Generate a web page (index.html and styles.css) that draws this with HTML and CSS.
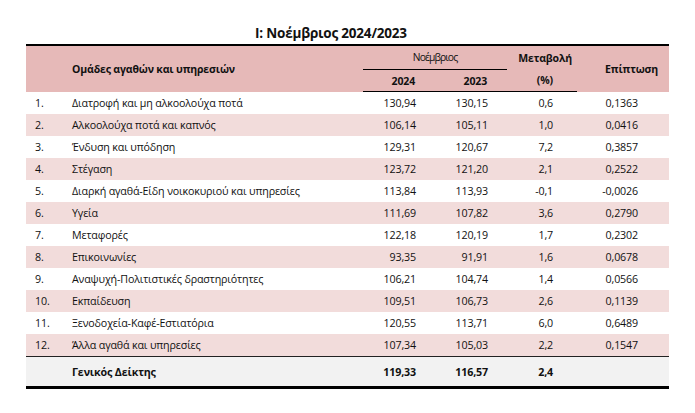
FILE: index.html
```html
<!DOCTYPE html>
<html lang="el">
<head>
<meta charset="utf-8">
<title>Νοέμβριος 2024/2023</title>
<link rel="stylesheet" href="styles.css">
</head>
<body>
<div class="page">
  <div class="title">I: Νοέμβριος 2024/2023</div>
  <table class="cpi">
    <colgroup>
      <col class="c-num"><col class="c-desc"><col class="c-y"><col class="c-y"><col class="c-chg"><col class="c-imp">
    </colgroup>
    <thead>
      <tr class="h1">
        <th colspan="2" rowspan="2" class="h-groups">Ομάδες αγαθών και υπηρεσιών</th>
        <th colspan="2" class="h-month"><span>Νοέμβριος</span></th>
        <th class="h-chg">Μεταβολή</th>
        <th rowspan="2" class="h-imp">Επίπτωση</th>
      </tr>
      <tr class="h2">
        <th class="h-year">2024</th>
        <th class="h-year">2023</th>
        <th class="h-pct">(%)</th>
      </tr>
    </thead>
    <tbody>
      <tr><td class="num">1.</td><td class="desc">Διατροφή και μη αλκοολούχα ποτά</td><td class="v">130,94</td><td class="v">130,15</td><td class="v chg">0,6</td><td class="v imp">0,1363</td></tr>
      <tr class="alt"><td class="num">2.</td><td class="desc">Αλκοολούχα ποτά και καπνός</td><td class="v">106,14</td><td class="v">105,11</td><td class="v chg">1,0</td><td class="v imp">0,0416</td></tr>
      <tr><td class="num">3.</td><td class="desc">Ένδυση και υπόδηση</td><td class="v">129,31</td><td class="v">120,67</td><td class="v chg">7,2</td><td class="v imp">0,3857</td></tr>
      <tr class="alt"><td class="num">4.</td><td class="desc">Στέγαση</td><td class="v">123,72</td><td class="v">121,20</td><td class="v chg">2,1</td><td class="v imp">0,2522</td></tr>
      <tr><td class="num">5.</td><td class="desc">Διαρκή αγαθά-Είδη νοικοκυριού και υπηρεσίες</td><td class="v">113,84</td><td class="v">113,93</td><td class="v chg">-0,1</td><td class="v imp">-0,0026</td></tr>
      <tr class="alt"><td class="num">6.</td><td class="desc">Υγεία</td><td class="v">111,69</td><td class="v">107,82</td><td class="v chg">3,6</td><td class="v imp">0,2790</td></tr>
      <tr><td class="num">7.</td><td class="desc">Μεταφορές</td><td class="v">122,18</td><td class="v">120,19</td><td class="v chg">1,7</td><td class="v imp">0,2302</td></tr>
      <tr class="alt"><td class="num">8.</td><td class="desc">Επικοινωνίες</td><td class="v">93,35</td><td class="v">91,91</td><td class="v chg">1,6</td><td class="v imp">0,0678</td></tr>
      <tr><td class="num">9.</td><td class="desc">Αναψυχή-Πολιτιστικές δραστηριότητες</td><td class="v">106,21</td><td class="v">104,74</td><td class="v chg">1,4</td><td class="v imp">0,0566</td></tr>
      <tr class="alt"><td class="num">10.</td><td class="desc">Εκπαίδευση</td><td class="v">109,51</td><td class="v">106,73</td><td class="v chg">2,6</td><td class="v imp">0,1139</td></tr>
      <tr><td class="num">11.</td><td class="desc">Ξενοδοχεία-Καφέ-Εστιατόρια</td><td class="v">120,55</td><td class="v">113,71</td><td class="v chg">6,0</td><td class="v imp">0,6489</td></tr>
      <tr class="alt"><td class="num">12.</td><td class="desc">Άλλα αγαθά και υπηρεσίες</td><td class="v">107,34</td><td class="v">105,03</td><td class="v chg">2,2</td><td class="v imp">0,1547</td></tr>
    </tbody>
    <tfoot>
      <tr class="total"><td class="num"></td><td class="desc">Γενικός Δείκτης</td><td class="v">119,33</td><td class="v">116,57</td><td class="v chg">2,4</td><td class="v imp"></td></tr>
    </tfoot>
  </table>
</div>
</body>
</html>
```

FILE: styles.css
```css
html, body {
  margin: 0;
  padding: 0;
  background: #ffffff;
}

.page {
  padding: 25px 0 0 26px;
  font-family: "Open Sans", "Noto Sans", "DejaVu Sans", sans-serif;
  color: #111;
}

.title {
  margin-left: 229px;
  font-size: 13.5px;
  font-weight: 700;
  line-height: 17px;
  height: 19px;
  color: #111;
  letter-spacing: -0.2px;
}

.cpi {
  border-collapse: collapse;
  table-layout: fixed;
  width: 643px;
  font-size: 10.7px;
  letter-spacing: -0.15px;
}

.c-num { width: 40px; }
.c-desc { width: 297px; }
.c-y { width: 72px; }
.c-chg { width: 70px; }
.c-imp { width: 92px; }

.cpi thead tr {
  background: #e6b9b8;
}

.cpi thead .h1 th {
  border-top: 2px solid #000;
  height: 23px;
}

.cpi thead .h2 th {
  border-bottom: 1.5px solid #000;
  height: 21px;
}

.cpi th {
  padding: 0;
  font-weight: 700;
  font-size: 10.5px;
  color: #111;
  vertical-align: middle;
}

.h-groups {
  text-align: left;
  padding-left: 46px !important;
}

.h-month {
  text-align: center;
  border-bottom: 1.5px solid #000;
}

.h-month span {
  font-size: 10.3px;
  font-weight: 400;
  letter-spacing: -0.9px;
  position: relative;
  top: -1px;
}

.h-year {
  text-align: right;
  padding-right: 20px !important;
}

.h-chg {
  text-align: right;
  padding-right: 5px !important;
}

.h-pct {
  text-align: right;
  padding-right: 24px !important;
}

.h-imp {
  text-align: right;
  padding-right: 11px !important;
}

.cpi td {
  height: 22px;
  padding: 0;
  vertical-align: middle;
  white-space: nowrap;
  overflow: hidden;
}

.cpi tbody tr.alt {
  background: #f2dcdb;
}

.num {
  padding-left: 9px !important;
}

.desc {
  padding-left: 6px !important;
}

.v {
  text-align: right;
  padding-right: 19px !important;
}

.v.chg {
  padding-right: 24px !important;
}

.v.imp {
  padding-right: 31px !important;
}

.cpi tfoot .total {
  background: #f2f2f2;
  font-weight: 700;
}

.cpi tfoot .total td {
  height: 29px;
  border-top: 1px solid #222;
  border-bottom: 3px solid #000;
}
```
